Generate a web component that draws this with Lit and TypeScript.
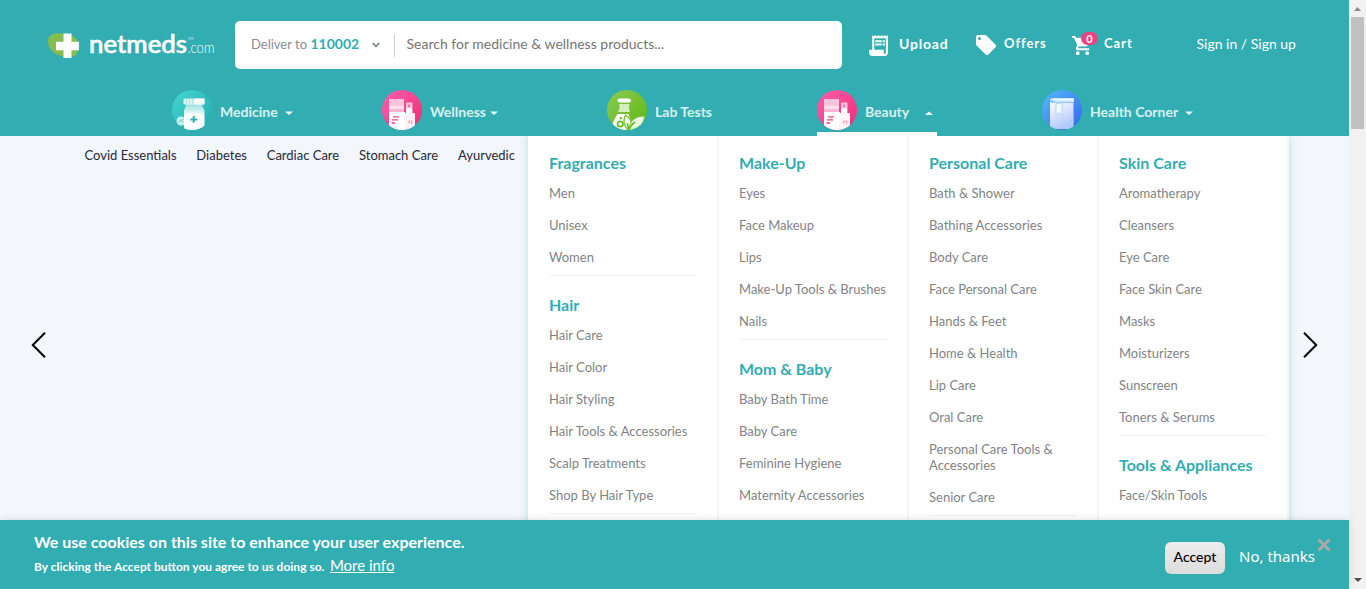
import { LitElement, html, svg, css, nothing } from "lit";
import { customElement } from "lit/decorators.js";

interface Group { title: string; items: string[]; open?: boolean; }

const columns: Group[][] = [
  [
    { title: "Fragrances", items: ["Men", "Unisex", "Women"] },
    { title: "Hair", items: ["Hair Care", "Hair Color", "Hair Styling", "Hair Tools & Accessories", "Scalp Treatments", "Shop By Hair Type"] },
  ],
  [
    { title: "Make-Up", items: ["Eyes", "Face Makeup", "Lips", "Make-Up Tools & Brushes", "Nails"] },
    { title: "Mom & Baby", items: ["Baby Bath Time", "Baby Care", "Feminine Hygiene", "Maternity Accessories"], open: true },
  ],
  [
    { title: "Personal Care", items: ["Bath & Shower", "Bathing Accessories", "Body Care", "Face Personal Care", "Hands & Feet", "Home & Health", "Lip Care", "Oral Care", "Personal Care Tools & Accessories", "Senior Care"] },
  ],
  [
    { title: "Skin Care", items: ["Aromatherapy", "Cleansers", "Eye Care", "Face Skin Care", "Masks", "Moisturizers", "Sunscreen", "Toners & Serums"] },
    { title: "Tools & Appliances", items: ["Face/Skin Tools"], open: true },
  ],
];

const medicineIcon = svg`
  <defs><linearGradient id="m" x1="0" y1="0" x2="1" y2="1"><stop offset="0" stop-color="#43d6d2"/><stop offset="1" stop-color="#24aaae"/></linearGradient>
  <linearGradient id="mb" x1="0" y1="0" x2="0" y2="1"><stop offset="0" stop-color="#9be0e0"/><stop offset=".5" stop-color="#fff"/></linearGradient>
  <clipPath id="mc"><circle cx="20" cy="20" r="20"/></clipPath></defs>
  <circle cx="20" cy="20" r="20" fill="url(#m)"/>
  <g clip-path="url(#mc)"><circle cx="9" cy="31" r="4.5" fill="#c9f0ef"/><path d="M6 32l6-3M8 29l3 4" stroke="#6ccdcd" stroke-width=".8"/>
  <path d="M14 14h16c0 4 2.500 4 2.500 8v15q0 3-3 3H15q-3 0-3-3V22c0-4 2-4 2-8z" fill="url(#mb)"/>
  <rect x="11.500" y="8.500" width="21" height="6" rx="1" fill="#d9f4f3"/><path d="M14.500 9v5M17.500 9v5M20.500 9v5" stroke="#b4e6e5"/><path d="M23 8.500h8.500q1 0 1 1v4q0 1-1 1H23z" fill="#f4fcfc"/>
  <rect x="14.500" y="23" width="13.500" height="12" rx="1.500" fill="#fff"/><path d="M21.700 26v6.800M18.300 29.400h6.800" stroke="#28b0b2" stroke-width="2"/></g>`;

const cosmeticsIcon = svg`
  <defs><linearGradient id="p" x1="0" y1="0" x2="1" y2="1"><stop offset="0" stop-color="#fb61ae"/><stop offset="1" stop-color="#ee2a74"/></linearGradient><clipPath id="pc"><circle cx="20" cy="20" r="20"/></clipPath></defs>
  <circle cx="20" cy="20" r="20" fill="url(#p)"/>
  <g clip-path="url(#pc)"><rect x="7" y="9" width="15" height="14" fill="#fcc3db"/><path d="M7 16h15v3H7z" fill="#fde3ee"/><path d="M7 19h15v3H7z" fill="#fbb5d3"/><rect x="7" y="22" width="16" height="18" fill="#fff"/>
  <rect x="24" y="12.500" width="6.500" height="12" rx="1" fill="#fcc4dc"/><rect x="26" y="14.500" width="2" height="2.500" fill="#f573a8"/><path d="M24 18.500h6v5.500h-6z" fill="#fff"/>
  <rect x="22.500" y="23" width="10.500" height="17" rx="1" fill="#fff3f8"/><path d="M11 26.800h6M10 29.800h6M9.500 33h3.500" stroke="#ee4286" stroke-width="1.300"/>
  <path d="M25.500 32h5.500M27 30v4M29.600 30v4" stroke="#f9a9c9" stroke-width="1"/></g>`;

const labIcon = svg`
  <defs><linearGradient id="l" x1="0" y1="0" x2="1" y2="1"><stop offset="0" stop-color="#8bcb56"/><stop offset="1" stop-color="#5eb610"/></linearGradient><clipPath id="lc"><circle cx="20" cy="20" r="20"/></clipPath></defs>
  <circle cx="20" cy="20" r="20" fill="url(#l)"/>
  <g clip-path="url(#lc)"><rect x="10.500" y="8.500" width="13.500" height="4" rx="2" fill="#fff"/><path d="M12 14h10.500q-1.500 4 .5 8H11q2.500-4 1-8z" fill="#d5eec0"/>
  <path d="M10.500 24h11l6 16H4l3-10z" fill="#fff"/><circle cx="13.300" cy="34" r="2.700" fill="#fff" stroke="#6cbd28" stroke-width="1.800"/><circle cx="13.800" cy="28.300" r="1.200" fill="#6cbd28"/>
  <path d="M21 40q-6.500-7-2.500-15q8 5 5 15z" fill="#fff" stroke="#6cbd28" stroke-width="1.200"/><path d="M22 40c0-9 6-14 15.500-14C37 35 31 40 22 40z" fill="#e9f7dd" stroke="#6cbd28" stroke-width=".8"/><path d="M21.500 41q2-6 6.500-9M21.500 41q0-5-1.500-8" stroke="#6cbd28" stroke-width="1.700" fill="none"/></g>`;

const bookIcon = svg`
  <defs><linearGradient id="h" x1="0" y1="0" x2="1" y2="1"><stop offset="0" stop-color="#55bcfb"/><stop offset="1" stop-color="#3463ed"/></linearGradient>
  <linearGradient id="hb" x1="0" y1="0" x2=".4" y2="1"><stop offset="0" stop-color="#fff"/><stop offset="1" stop-color="#b3c9fa"/></linearGradient><clipPath id="hc"><circle cx="20" cy="20" r="20"/></clipPath></defs>
  <circle cx="20" cy="20" r="20" fill="url(#h)"/>
  <g clip-path="url(#hc)"><path d="M8 10.500q0-2.500 3-2.500h21v4H13z" fill="#c5e3fd"/><path d="M31 12h1v27h-1z" fill="#80aef6"/><path d="M8 10.500q0 2 3 2h20V39H11q-3 0-3-3z" fill="url(#hb)"/><path d="M11 9h20v1.200H12z" fill="#fff"/><path d="M13.500 12.500h7V27L17 23.300 13.500 27z" fill="#b7d6fa"/><path d="M14.500 14h5v10.500L17 22l-2.500 2.500z" fill="#f4f9ff"/></g>`;

const circleIcon = (g: unknown) => html`<svg class="circle" width="40" height="40" viewBox="0 0 40 40">${g}</svg>`;

@customElement("app-root")
export class AppRoot extends LitElement {
  static styles = css`
    :host { display: block; width: 1366px; height: 589px; overflow: hidden; position: relative; font-family: Lato, "Liberation Sans", sans-serif; background: #f3f6fb; }
    * { box-sizing: border-box; }
    svg { display: block; flex: none; }
    .shell { display: grid; grid-template-columns: 1349px 17px; height: 589px; }
    .page { display: grid; grid-template-rows: 136px 384px 69px; height: 589px; min-width: 0; }
    header { background: #32adb1; color: #fff; }
    .top { display: flex; padding: 21px 0 0 48px; height: 90px; align-items: flex-start; white-space: nowrap; }
    .logo { width: 187px; height: 48px; display: flex; }
    .search { width: 607px; height: 48px; background: #fff; border-radius: 5px; display: flex; align-items: center; padding-left: 16px; color: #757575; font-size: 14px; }
    .deliver { width: 59.500px; font-size: 13px; color: #8a8c9a; padding-bottom: 3px; }
    .pin { color: #32adb1; font-weight: 700; font-size: 14px; width: 61.500px; padding-bottom: 3px; }
    .hint { padding-bottom: 3px; }
    .sep { width: 1px; height: 23px; background: #cfcfcf; margin: 0 11.500px 0 14px; }
    .action { display: flex; align-items: center; height: 48px; font-size: 13px; font-weight: 700; letter-spacing: .95px; }
    .upload { margin-left: 27px; width: 107px; gap: 11px; font-size: 14px; letter-spacing: .8px; }
    .offers { width: 96px; gap: 8px; }
    .cart { width: 124.500px; gap: 11px; position: relative; }
    .badge { position: absolute; left: 9px; top: 11px; width: 17px; height: 13px; border-radius: 7px; background: #ef4281; font-size: 11px; line-height: 13px; text-align: center; letter-spacing: 0; }
    .sign { font-size: 14px; line-height: 46px; }
    .label { padding-bottom: 4px; }
    .upload .label { padding-bottom: 3px; }
    nav { display: flex; height: 46px; padding-left: 172px; font-size: 14px; font-weight: 700; color: #d9f1f0; white-space: nowrap; }
    .tab { display: flex; height: 46px; align-items: flex-start; }
    .tab .circle { margin-right: 8px; }
    .tab .name { line-height: 44px; }
    .tab .caret { margin-top: 21px; }
    .t1 { width: 210px; } .t2 { width: 225px; } .t3 { width: 210px; } .t4 { width: 120px; margin-right: 105px; border-bottom: 4px solid #fff; }
    .t1 .name { width: 65px; } .t2 .name { width: 60px; } .t4 .name { width: 60px; } .t5 .name { width: 95px; }
    .body { display: flex; position: relative; min-height: 0; overflow: hidden; }
    .quick { width: 528px; display: flex; gap: 19.800px; padding: 11px 0 0 84.500px; font-size: 13px; line-height: 17px; color: #25283a; white-space: nowrap; }
    .panel { width: 761px; padding-left: 1px; background: #fff; display: flex; box-shadow: 0 0 8px rgba(50,173,177,.32); height: 500px; }
    .col { width: 190px; padding: 17px 20px 0; border-right: 2px solid #f3f8fb; }
    .group { border-bottom: 1px solid #f1f2f3; margin-bottom: 19px; padding-bottom: 10px; }
    .group.open { border-bottom: 0; }
    h3 { margin: 0 0 12px; font-size: 16px; line-height: 20px; color: #32adb1; font-weight: 700; white-space: nowrap; }
    .item { font-size: 13px; line-height: 16px; color: #818486; margin-bottom: 16px; }
    .item:last-child { margin-bottom: 0; }
    .arrow { position: absolute; top: 195px; }
    .prev { left: 31px; } .next { left: 1301px; }
    footer { background: #32adb1; color: #fff; display: flex; z-index: 1; box-shadow: 0 0 8px rgba(0,0,0,.13); padding-left: 34px; white-space: nowrap; }
    .msg { width: 1131px; padding-top: 11px; }
    .big { font-size: 16px; font-weight: 700; line-height: 22px; }
    .small { font-size: 12px; font-weight: 700; line-height: 24px; display: flex; align-items: baseline; gap: 5.500px; }
    .more { font-size: 15px; font-weight: 400; text-decoration: underline; }
    .accept { width: 60px; height: 32px; margin-top: 22px; border-radius: 6px; background: linear-gradient(#ededed, #dcdcdc); color: #000; font-size: 14px; font-weight: 500; line-height: 30px; text-align: center; }
    .no { width: 78px; margin: 21px 0 0 14px; line-height: 31px; font-family: "Noto Sans", "Open Sans", sans-serif; font-size: 15px; }
    .close { margin-top: 18px; }
    .scroll { background: #f1f1f1; display: flex; flex-direction: column; align-items: center; }
    .thumb { width: 13px; height: 112px; background: #c1c1c1; margin-top: 2px; }
    .up { margin-top: 5px; height: 10px; } .down { margin-top: auto; margin-bottom: 7px; }
  `;

  caret(up = false) {
    return html`<svg class="caret" width="8" height="4" viewBox="0 0 8 4"><path d=${up ? "M0 4L4 .5L8 4z" : "M0 .5H8L4 4z"} fill="#eefafa"/></svg>`;
  }

  tab(cls: string, icon: unknown, name: string, caret: unknown) {
    return html`<div class="tab ${cls}">${circleIcon(icon)}<span class="name">${name}</span>${caret}</div>`;
  }

  render() {
    return html`<div class="shell"><div class="page">
      <header>
        <div class="top">
          <div class="logo"><svg width="170" height="48" viewBox="0 0 170 48">
            <path d="M0 20C0 14 6 11.500 14 12.500C24 13 31 17 31 25C31 33 26 37 19 36.500C10 35 0 31 0 20z" fill="#85bd50"/>
            <path d="M15.500 12.500h8v8.300H31v8.400h-7.500v7.800h-8v-7.800H8v-8.400h7.500z" fill="#fff"/>
            <text x="41" y="32" fill="#fff" stroke="#fff" stroke-width=".6" font-family="Lato" font-size="24" font-weight="500" textLength="98" lengthAdjust="spacingAndGlyphs">netmeds</text>
            <text x="139.500" y="32" fill="#fff" font-family="Lato" font-size="15" font-weight="300" textLength="27" lengthAdjust="spacingAndGlyphs">.com</text>
            <text x="140" y="18.500" fill="#d9f0ef" font-family="Lato" font-size="3.500">TM</text></svg></div>
          <div class="search"><span class="deliver">Deliver to</span><span class="pin">110002</span>
            <svg width="8" height="6" viewBox="0 0 8 6"><path d="M.7 1L4 4.400L7.300 1" fill="none" stroke="#6d747c" stroke-width="1.400"/></svg>
            <span class="sep"></span><span class="hint">Search for medicine &amp; wellness products...</span></div>
          <div class="action upload"><svg width="19" height="21" viewBox="3 2 18 20"><path d="M19.500 3.500L18 2l-1.500 1.500L15 2l-1.500 1.500L12 2l-1.500 1.500L9 2 7.500 3.500 6 2v14H3v3c0 1.660 1.340 3 3 3h12c1.660 0 3-1.340 3-3V2zM19 19c0 .55-.45 1-1 1s-1-.45-1-1v-3H8V5h11z" fill="#fff"/><path d="M9 7h6v2H9zM16 7h2v2h-2zM9 10h6v2H9zM16 10h2v2h-2z" fill="#fff"/></svg><span class="label">Upload</span></div>
          <div class="action offers"><svg width="20" height="20" viewBox="0 0 20 20"><path d="M19.400 9.600l-9-9A2 2 0 0 0 9 0H2a2 2 0 0 0-2 2v7c0 .5.200 1 .6 1.400l9 9c.8.800 2 .8 2.800 0l7-7c.8-.8.8-2 0-2.800z" fill="#fff"/><circle cx="3.500" cy="3.500" r="1.500" fill="#32adb1"/></svg><span class="label">Offers</span></div>
          <div class="action cart"><svg width="21" height="21" viewBox="1 2 22 20"><path d="M7 18a2 2 0 1 0 0 4 2 2 0 0 0 0-4zM1 2v2h2l3.600 7.590-1.350 2.450C4.520 15.370 5.480 17 7 17h12v-2H7.420a.25.25 0 0 1-.24-.38L8.100 13h7.450c.75 0 1.410-.41 1.750-1.030L20.880 5.480A1 1 0 0 0 20 4H5.210l-.94-2zM17 18a2 2 0 1 0 0 4 2 2 0 0 0 0-4z" fill="#fff"/></svg><span class="badge">0</span><span class="label">Cart</span></div>
          <div class="sign">Sign in / Sign up</div>
        </div>
        <nav>
          ${this.tab("t1", medicineIcon, "Medicine", this.caret())}
          ${this.tab("t2", cosmeticsIcon, "Wellness", this.caret())}
          ${this.tab("t3", labIcon, "Lab Tests", nothing)}
          ${this.tab("t4", cosmeticsIcon, "Beauty", this.caret(true))}
          ${this.tab("t5", bookIcon, "Health Corner", this.caret())}
        </nav>
      </header>
      <main class="body">
        <div class="quick">${["Covid Essentials", "Diabetes", "Cardiac Care", "Stomach Care", "Ayurvedic"].map(t => html`<span>${t}</span>`)}</div>
        <div class="panel">${columns.map(c => html`<div class="col">${c.map(g => html`<div class="group ${g.open ? "open" : ""}"><h3>${g.title}</h3>${g.items.map(i => html`<div class="item">${i}</div>`)}</div>`)}</div>`)}</div>
        <svg class="arrow prev" width="17" height="28" viewBox="0 0 17 28"><path d="M14 1.800L1.800 14L14 26.200" fill="none" stroke="#000" stroke-width="2"/></svg>
        <svg class="arrow next" width="17" height="28" viewBox="0 0 17 28"><path d="M3 1.800L15.200 14L3 26.200" fill="none" stroke="#000" stroke-width="2"/></svg>
      </main>
      <footer>
        <div class="msg"><div class="big">We use cookies on this site to enhance your user experience.</div>
          <div class="small"><span>By clicking the Accept button you agree to us doing so.</span><span class="more">More info</span></div></div>
        <div class="accept">Accept</div><div class="no">No, thanks</div>
        <svg class="close" width="14" height="14" viewBox="0 0 14 14"><path d="M1.500 1.500l11 11M12.500 1.500l-11 11" stroke="#a9abab" stroke-width="3"/></svg>
      </footer></div>
      <div class="scroll"><svg class="up" width="7" height="10" viewBox="0 0 7 10"><path d="M0 6l3.500-4L7 6z" fill="#8b8b8b"/></svg><div class="thumb"></div><svg class="down" width="8" height="4" viewBox="0 0 8 4"><path d="M0 0h8L4 4z" fill="#505050"/></svg></div>
    </div>`;
  }
}
